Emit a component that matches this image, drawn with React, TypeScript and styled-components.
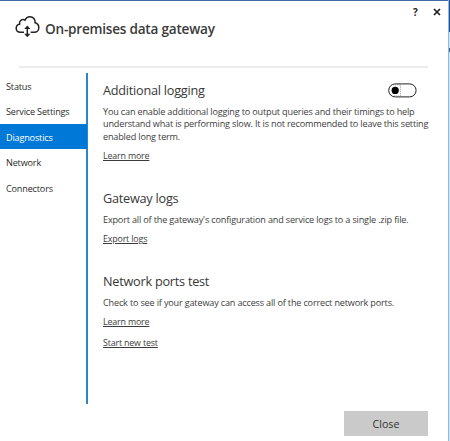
import React from 'react';
import styled, { createGlobalStyle } from 'styled-components';

const GlobalStyle = createGlobalStyle`
  * { box-sizing: border-box; }
  body { margin: 0; background: #fff; overflow: hidden; }
  button { border: 0; padding: 0; background: none; font: inherit; color: inherit; }
`;

const Screen = styled.div`
  display: grid;
  grid-template-columns: 448px 2px;
  width: 450px;
  height: 441px;
  font-family: 'Open Sans', 'Noto Sans', sans-serif;
  font-size: 9.1px;
  letter-spacing: -0.17px;
  color: #3c3c3c;
`;

const Dialog = styled.main`
  display: flex;
  flex-direction: column;
  border-top: 1px solid #4668a5;
  background: #fff;
`;

const Backdrop = styled.div`
  background: linear-gradient(#1d4c9b 32px, #c9e4f6 32px 48px, #4b6484 48px 52px, #c9e4f6 52px);
  border-left: 1px solid #8dbbe5;
`;

const Header = styled.header`
  display: flex;
  align-items: flex-start;
  height: 67px;
  margin: 0 20px 0 19px;
  padding-top: 14px;
  border-bottom: 2px solid #ececec;
`;

const CloudIcon = styled.svg`
  flex: none;
  width: 25px;
  height: 24px;
  margin-left: -4px;
`;

const Title = styled.h1`
  flex: 1;
  margin: 5px 0 0 5px;
  font-size: 13.6px;
  font-weight: 600;
  line-height: 18px;
  letter-spacing: -0.23px;
  color: #3a3a3a;
`;

const WindowControls = styled.div`
  display: flex;
  align-items: center;
  justify-content: space-between;
  width: 28px;
  height: 12px;
  margin: -9px -13px 0 0;
  color: #222;
`;

const HelpButton = styled.button`
  font-size: 10px;
  font-weight: 700;
  line-height: 12px;
`;

const CloseIcon = styled.svg`
  width: 8px;
  height: 8px;
`;

const Body = styled.div`
  display: flex;
  height: 331px;
  margin-top: 5px;
`;

const Nav = styled.nav`
  flex: none;
  width: 88px;
  border-right: 2px solid #2e86c8;
`;

const NavItem = styled.a<{ $active?: boolean }>`
  display: flex;
  align-items: center;
  height: 25.4px;
  margin-right: -1px;
  padding: 1.5px 0 0 6px;
  white-space: nowrap;
  background: ${(p) => (p.$active ? '#0078d7' : 'transparent')};
  color: ${(p) => (p.$active ? '#fff' : '#2b2b2b')};
`;

const Content = styled.div`
  display: flex;
  flex-direction: column;
  gap: 27px;
  padding: 8px 0 0 15px;
`;

const Section = styled.section`
  width: 325px;
`;

const SectionHead = styled.div`
  display: flex;
  justify-content: space-between;
  align-items: center;
  height: 18px;
  padding-right: 11px;
`;

const SectionTitle = styled.h2`
  margin: 0;
  font-size: 12.7px;
  font-weight: 400;
  line-height: 18px;
  letter-spacing: -0.24px;
  color: #383838;
`;

const Paragraph = styled.p`
  margin: 7px 0 0;
  line-height: 12.3px;
  white-space: nowrap;
`;

const ActionLink = styled.a`
  display: block;
  width: max-content;
  margin-top: 6px;
  line-height: 13px;
  font-size: 8.9px;
  text-decoration: underline;
  text-decoration-thickness: 1px;
  text-underline-offset: 1px;

  & + & { margin-top: 8px; }
`;

const Switch = styled.svg`
  width: 29px;
  height: 15px;
`;

const Footer = styled.footer`
  display: flex;
  justify-content: flex-end;
  padding: 7px 20px 0 0;
`;

const CloseButton = styled.button`
  width: 84px;
  height: 25px;
  padding-top: 1px;
  background: #cacaca;
  font-size: 10.7px;
  color: #333;
`;

const navItems = ['Status', 'Service Settings', 'Diagnostics', 'Network', 'Connectors'];

export default function App() {
  return (
    <>
      <GlobalStyle />
      <Screen>
        <Dialog>
          <Header>
            <CloudIcon viewBox="0 0 25 24" fill="none" stroke="#222" strokeWidth="1.5">
              <path d="M9 17.3H5.5C2.9 17.3 1.2 15.6 1.2 13.3C1.2 11.2 2.6 9.5 4.6 9.2C4.1 6.5 5.8 4.5 8 4.5C8.8 4.5 9.4 4.7 10 5.1C10.9 2.9 12.8 1.7 15 1.7C18.3 1.7 20.5 4.4 20.1 7.8C22.4 8.4 23.8 10.4 23.8 12.7C23.8 15.4 21.8 17.3 19.2 17.3H15.7" />
              <path d="M12.3 12V20.5" />
              <path d="M9.2 14L12.3 10.5L15.4 14ZM9.2 18.7L12.3 22.2L15.4 18.7Z" fill="#222" stroke="none" />
            </CloudIcon>
            <Title>On-premises data gateway</Title>
            <WindowControls>
              <HelpButton>?</HelpButton>
              <button aria-label="Close window">
                <CloseIcon viewBox="0 0 8 8" stroke="#222" strokeWidth="1.7">
                  <path d="M1 1L7 7M7 1L1 7" />
                </CloseIcon>
              </button>
            </WindowControls>
          </Header>
          <Body>
            <Nav>
              {navItems.map((item) => (
                <NavItem key={item} $active={item === 'Diagnostics'}>{item}</NavItem>
              ))}
            </Nav>
            <Content>
              <Section>
                <SectionHead>
                  <SectionTitle>Additional logging</SectionTitle>
                  <Switch viewBox="0 0 29 15" role="switch" aria-checked="false">
                    <rect x="0.7" y="0.9" width="27.4" height="13" rx="6.5" fill="#fff" stroke="#222" />
                    <circle cx="7.2" cy="7.4" r="3.6" fill="#000" />
                    <path d="M5 1.8H12.5V13H5" fill="none" stroke="#777" strokeWidth="0.7" strokeDasharray="1 1" />
                  </Switch>
                </SectionHead>
                <Paragraph>
                  You can enable additional logging to output queries and their timings to help<br />
                  understand what is performing slow. It is not recommended to leave this setting<br />
                  enabled long term.
                </Paragraph>
                <ActionLink>Learn more</ActionLink>
              </Section>
              <Section>
                <SectionHead><SectionTitle>Gateway logs</SectionTitle></SectionHead>
                <Paragraph>Export all of the gateway's configuration and service logs to a single .zip file.</Paragraph>
                <ActionLink>Export logs</ActionLink>
              </Section>
              <Section>
                <SectionHead><SectionTitle>Network ports test</SectionTitle></SectionHead>
                <Paragraph>Check to see if your gateway can access all of the correct network ports.</Paragraph>
                <ActionLink>Learn more</ActionLink>
                <ActionLink>Start new test</ActionLink>
              </Section>
            </Content>
          </Body>
          <Footer><CloseButton>Close</CloseButton></Footer>
        </Dialog>
        <Backdrop />
      </Screen>
    </>
  );
}
